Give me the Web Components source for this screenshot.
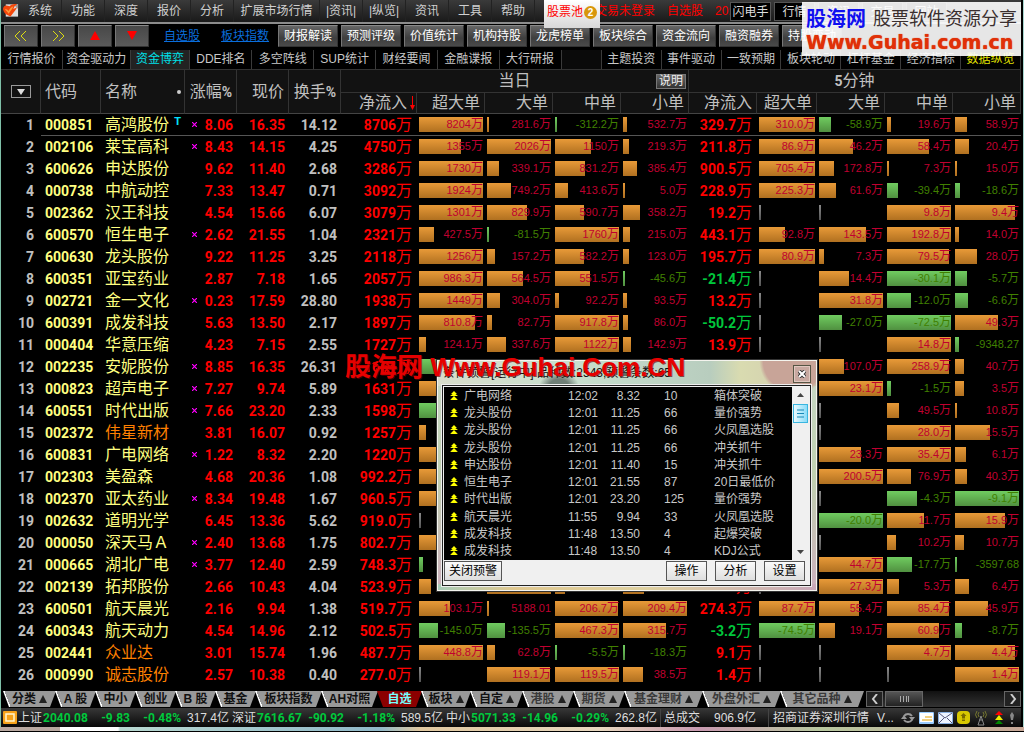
<!DOCTYPE html>
<html lang="zh-CN">
<head>
<meta charset="utf-8">
<title>行情报价</title>
<style>
html,body{margin:0;background:#000;height:100%}
body{font:12px/16px "Liberation Sans","Noto Sans CJK SC",sans-serif;color:#c8c8c8;overflow:hidden}
</style>
</head>
<body>
<trade-desk></trade-desk>
<script>
const BASE = `*{box-sizing:border-box}button,a{font:inherit;color:inherit;white-space:nowrap}button{margin:0;padding:0;border:0;background:none}`;
function define(name, css, html) {
  customElements.define(name, class extends HTMLElement {
    constructor() {
      super();
      this.attachShadow({mode: 'open'}).innerHTML = `<style>${BASE}${css}</style>` + (typeof html === 'function' ? html() : html);
    }
  });
}

define('app-menu', `
:host{display:flex;align-items:stretch;height:24px;background:linear-gradient(#3a3a3a,#1b1b1b 21px);border-bottom:2px solid #8c8c8c;white-space:nowrap;position:relative}
svg{width:17px;height:18px;margin:1px 0 0 1px;flex:none}
nav{display:flex}
nav button{width:43px;border-right:1px solid #222;color:#d0d0d0}
nav button.wide{width:86px}
.pool{width:56px;height:28px;margin-left:9px;background:linear-gradient(#fff,#d8d8d8);color:#f00;z-index:1;padding-bottom:4px;flex:none;display:flex;align-items:center;justify-content:center}
.pool b{width:13px;height:13px;border-radius:7px;background:#d8960a;color:#fff;font:bold 10px/13px "Liberation Sans";margin-left:1px}
.note{color:#f00;line-height:23px;margin-left:-5px;width:72px;flex:none}
.note.s{width:48px;margin:0}.note.t{width:15px;margin:0;overflow:hidden}
.box{width:41px;height:19px;margin:2px 3px 0 0;border:1px solid #555;background:#000;color:#ddd;flex:none}
`, () => {
  const items = ['系统','功能','深度','报价','分析','扩展市场行情','|资讯|','|纵览|','资讯','工具','帮助'];
  return `<svg viewBox="0 0 18 18"><rect x="4" y="3" width="13" height="13" fill="#ddd"/><path d="M12 3h5v5z" fill="#999"/><path d="M1 8C2 3 5 4 8 5C10 3 13 2 16 3C13 5 13 6 12 8L16 6C14 10 11 13 9 16C6 14 3 15 1 8Z" fill="#f4470b"/><path d="M3 8c2 0 3 1 4 2 1-3 3-4 5-5-1 3-3 5-5 8-1-2-3-3-4-5z" fill="#ff9a3a"/></svg>
  <nav>${items.map(t => `<button class="${t.length > 5 ? 'wide' : 'm'}">${t}</button>`).join('')}</nav>
  <button class="pool">股票池<b>2</b></button>
  <span class="note">交易未登录</span><span class="note s">自选股</span><span class="note t">20:</span>
  ${['闪电手','行情','资讯','交易','网站'].map(t => `<button class="box">${t}</button>`).join('')}`;
});

define('tool-bar', `
:host{display:flex;height:26px;padding:1px 0 3px 3px;gap:3px;background:#000;overflow:hidden}
button{width:60px;flex:none;background:linear-gradient(#666,#3e3e3e 60%,#4a4a4a);border:1px solid #333;border-top-color:#8a8a8a;border-left-color:#777;color:#fff;line-height:20px}
.nav{width:34px;background:linear-gradient(#484848,#5a5a5a)}
svg{display:block;margin:auto;width:14px;height:12px}
a{color:#0a6edc;line-height:22px;flex:none}
.a1{margin:0 18px 0 12px}.a2{margin-right:6px}
`, () => {
  const ic = ['<path d="M6 1L1 6l5 5M12 1L7 6l5 5" fill="none" stroke="#dddd10"/>','<path d="M2 1l5 5-5 5M8 1l5 5-5 5" fill="none" stroke="#dddd10"/>','<path d="M7 1l5 9H2z" fill="red"/>','<path d="M7 10L2 1h10z" fill="red"/>'];
  const names = ['上一页','下一页','上移','下移'];
  return ic.map((p,i) => `<button class="nav" aria-label="${names[i]}"><svg viewBox="0 0 14 12">${p}</svg></button>`).join('')
   + '<a class="a1" href="#">自选股</a><a class="a2" href="#">板块指数</a>'
   + ['财报解读','预测评级','价值统计','机构持股','龙虎榜单','板块综合','资金流向','融资融券','持股变动'].map(t => `<button>${t}</button>`).join('');
});

define('view-tabs', `
:host{display:flex;height:19px;background:#0a0a0a}
button{flex:60 1 0;border-right:1px solid #3a3a3a;color:#c8c8c8;background:#000;line-height:19px}
.w{flex-grow:68}.n{flex-grow:62}.gap{flex:40 1 0;border-right:1px solid #3a3a3a}
.on{background:#222;color:#00e0e8}.y{color:#e0e000}
`, () => {
  const l = ['行情报价','资金驱动力','资金博弈','DDE排名','多空阵线','SUP统计','财经要闻','金融谍报','大行研报'];
  const r = ['主题投资','事件驱动','一致预期','板块轮动','杠杆基金','经济指标','数据纵览'];
  return l.map((t,i) => `<button class="${i===1?'w':i===2?'on':'n'}">${t}</button>`).join('') + '<span class="gap"></span>'
   + r.map((t,i) => `<button class="${i===6?'y':''}">${t}</button>`).join('');
});

// Each row: code, name, flag, change, price, turnover, net, four day cells, net 5m, four 5m cells.
// A flow cell is "value/bar width"; "0" is an idle marker, "_" an empty cell.
const ROWS = `000851 高鸿股份 T 8.06 16.35 14.12 8706 8204/64 281.6/2 -312.2/2 532.7/4 329.7 310.0/56 -58.9/12 19.6/4 58.9/12
002106 莱宝高科 x 8.43 14.15 4.25 4750 1355/42 2026/64 1150/36 219.3/6 211.8 86.9/56 46.2/34 58.4/42 20.4/14
600626 申达股份 . 9.62 11.40 2.68 3286 1730/64 339.1/12 831.2/30 385.4/14 900.5 705.4/56 172.8/15 7.3/2 15.0/2
000738 中航动控 . 7.33 13.47 0.71 3092 1924/64 749.2/24 413.6/13 5.0/2 228.9 225.3/56 61.6/17 -39.4/11 -18.6/5
002362 汉王科技 . 4.54 15.66 6.07 3079 1301/64 829.9/40 590.7/29 358.2/17 19.2 0 0 9.8/64 9.4/60
600570 恒生电子 x 2.62 21.55 1.04 2321 427.5/15 -81.5/2 1760/64 215.0/7 443.1 92.8/26 143.5/47 192.8/64 14.0/4
600630 龙头股份 . 9.22 11.25 3.25 2118 1256/64 157.2/8 582.2/29 123.0/6 195.7 80.9/56 7.3/5 79.5/62 28.0/22
600351 亚宝药业 . 2.87 7.18 1.65 2057 986.3/64 564.5/36 551.5/35 -45.6/2 -21.4 0 14.4/30 -30.1/64 -5.7/12
002721 金一文化 x 0.23 17.59 28.80 1938 1449/64 304.0/13 92.2/4 93.5/4 13.2 0 31.8/64 -12.0/24 -6.6/13
600391 成发科技 . 5.63 13.50 2.17 1897 810.8/56 82.7/5 917.8/64 86.0/5 -50.2 0 -27.0/23 -72.5/64 49.3/43
000404 华意压缩 . 4.23 7.15 2.55 1727 124.1/7 337.6/19 1122/64 142.9/8 13.9 0 0 14.8/64 -9348.27/4
002235 安妮股份 x 8.85 16.35 26.31 1664 -/64 _ _ _ _ _ 107.0/25 258.9/62 40.7/9
000823 超声电子 x 7.27 9.74 5.89 1631 +/64 _ _ _ _ _ 23.1/64 -1.5/4 3.5/9
600551 时代出版 x 7.66 23.20 2.33 1598 -/64 _ _ _ _ _ 0 49.5/12 10.8/2
002372 *伟星新材 . 3.81 16.07 0.92 1257 +/7 _ _ _ _ _ 0 28.0/64 15.5/35
600831 广电网络 x 1.22 8.32 2.20 1220 +/64 _ _ _ _ _ 23.3/42 35.4/64 6.1/11
002303 美盈森 . 4.68 20.36 1.08 992.2 +/64 _ _ _ _ _ 200.5/64 76.9/24 40.3/12
002370 亚太药业 x 8.34 19.48 1.67 960.5 +/64 _ _ _ _ _ 0 -4.3/30 -9.1/64
002632 道明光学 . 6.45 13.36 5.62 919.0 0 _ _ _ _ _ -20.0/64 11.7/37 15.9/50
000050 深天马Ａ x 2.40 13.68 1.75 802.7 +/64 _ _ _ _ _ 0 10.2/9 10.7/9
000665 湖北广电 x 3.77 12.40 2.59 748.3 -/4 _ _ _ _ _ 44.7/64 -17.7/25 -3597.68/2
002139 拓邦股份 . 2.66 10.43 4.04 523.9 +/12 +/64 +/10 +/21 38.9 0 27.3/64 5.3/12 6.4/14
600501 航天晨光 . 2.16 9.94 1.38 519.7 103.1/31 5188.01/2 206.7/63 209.4/64 274.3 87.7/56 55.4/40 85.4/62 45.9/33
600343 航天动力 . 4.54 14.96 2.12 502.5 -145.0/19 -135.5/18 467.3/64 315.7/43 -3.2 -74.5/56 19.1/16 60.9/52 -8.7/7
002441 *众业达 . 3.01 15.74 1.96 487.7 448.8/64 62.8/8 -5.5/2 -18.3/2 9.1 0 0 4.7/64 4.4/60
000990 *诚志股份 . 2.57 10.38 0.40 277.0 0 119.1/63 119.5/64 38.5/20 1.4 0 0 0 1.4/64`.split('\n').map(r => r.split(' '));

function net(v) {
  return v === '_' ? '<td></td>' : `<td class="n ${v[0] === '-' ? 'dn' : 'up'}">${v}<i>万</i></td>`;
}
function flow(v) {
  if (v === '_') return '<td></td>';
  if (v === '0') return '<td class="f z" style="--w:2px"></td>';
  const [t, w] = v.split('/');
  const txt = t.length < 2 ? '' : /\.\d\d$/.test(t) ? t : t + '<i>万</i>';
  return `<td class="f ${t[0] === '-' ? 'g' : 'o'}" style="--w:${w}px">${txt}</td>`;
}
define('quote-table', `
:host{display:block;background:#000;padding-bottom:5px}
table{width:100%;table-layout:fixed;border-collapse:separate;border-spacing:0;border-top:1px solid #333}
th{font:16px/20px Roboto,"Noto Sans CJK SC",sans-serif;color:#c0c0c0;background:#121212;height:22px;padding:0 4px;border-right:1px solid #333;text-align:right;white-space:nowrap}
tr:nth-child(2) th{border-top:1px solid #333}
tr:nth-child(2) th,th[rowspan]{border-bottom:1px solid #444}
th.l{text-align:left}th.c{text-align:center}
th.net{padding-right:9px}
th b{font-weight:bold;font-size:14px}
.grp{display:grid;grid-template-columns:1fr auto 1fr;align-items:center}
.grp button{justify-self:end;width:30px;height:15px;font-size:12px;line-height:12px;border:1px solid #777;background:linear-gradient(#666,#333);color:#eee;margin-right:-2px}
.pick{width:20px;height:13px;border:1px solid #999;display:block;margin:auto}
.pick svg,.arr{display:block;margin:auto}
.nm{display:flex;justify-content:space-between;align-items:center;padding-right:0}
.nm u{width:4px;height:4px;border-radius:2px;background:#ccc;margin-right:-1px}
.net span{position:relative}
.net .arr{position:absolute;right:-8px;top:3px}
td{height:22px;padding:0 4px;font:bold 14px/18px Roboto,"Noto Sans CJK SC",sans-serif;text-align:right;white-space:nowrap}
td.i{color:#c0c0c0;padding-right:7px}
td.c{color:#ffff80;text-align:left}
td.m{font-weight:normal;font-size:16px;color:#ffff80;text-align:left;position:relative}
td.m.hot{color:#ff8000}
td.m sup{position:absolute;right:4px;top:2px;font:bold 11px/11px "Liberation Sans";color:#00e0ff}
td i{font:normal 16px/1 "Noto Sans CJK SC",sans-serif;line-height:0}
td.n{padding-right:5px}
.up{color:#f00}.dn{color:#00c83c}.w{color:#c0c0c0}
td.x{position:relative}
td.x svg{position:absolute;left:7px;top:8px}
td.f{font:11px/18px "Liberation Sans",sans-serif;padding:0 2px 2px 2px;background:var(--bar) 2px 3px/var(--w) 15px no-repeat}
td.f i{font-size:12px;line-height:0}
.o{--bar:linear-gradient(#e89a38,#b07020);color:#c00030}
.g{--bar:linear-gradient(#70cc60,#509040);color:#408000}
.z{--bar:linear-gradient(#888,#555)}
tbody tr:first-child td:not(.i){box-shadow:inset 0 -1px #555}
`, () => {
  const cols = [40,60,84,52,52,52,76,68,68,68,68,68,60,68,68,68];
  const sub = ['超大单','大单','中单','小单'].map(t => `<th>${t}</th>`).join('');
  const cross = '<svg width="5" height="5"><path d="M0 0l5 5M5 0L0 5" stroke="#f0f" stroke-width="1.200"/></svg>';
  return `<table><colgroup>${cols.map(w => `<col style="width:${w}px">`).join('')}</colgroup><thead><tr>
  <th rowspan="2"><button class="pick" aria-label="选择"><svg width="8" height="6"><path d="M0 0h8L4 6z" fill="#ddd"/></svg></button></th>
  <th rowspan="2" class="l">代码</th><th rowspan="2" class="l"><div class="nm">名称<u></u></div></th><th rowspan="2">涨幅<b>%</b></th><th rowspan="2">现价</th><th rowspan="2">换手<b>%</b></th>
  <th colspan="5"><div class="grp"><span></span><span>当日</span><button>说明</button></div></th><th colspan="5" class="c"><b>5</b>分钟</th></tr>
  <tr><th class="net"><span>净流入<svg class="arr" width="5" height="14"><path d="M2 0h1v9h2L2.500 14 0 9h2z" fill="red"/></svg></span></th>${sub}<th>净流入</th>${sub}</tr></thead><tbody>` +
  ROWS.map((r, i) => {
    const hot = r[1][0] === '*';
    return `<tr><td class="i">${i + 1}</td><td class="c">${r[0]}</td><td class="m ${hot ? 'hot' : ''}">${r[1].replace('*', '')}${r[2] === 'T' ? '<sup>T</sup>' : ''}</td><td class="up x">${r[2] !== '.' ? cross : ''}${r[3]}</td><td class="up">${r[4]}</td><td class="w">${r[5]}</td>${net(r[6])}${r.slice(7, 11).map(flow).join('')}${net(r[11])}${r.slice(12).map(flow).join('')}</tr>`;
  }).join('') + '</tbody></table>';
});

define('sheet-tabs', `
:host{display:flex;height:17px;padding-left:2px;background:#000;align-items:stretch}
button{flex:none;margin-right:-1px;clip-path:polygon(0 0,100% 0,calc(100% - 6px) 100%,6px 100%);background:linear-gradient(69deg,#fff 7px,#999 7px);font-weight:bold;color:#111;line-height:16px;height:16px;text-align:center}
.dim{color:#3a3a3a}
.on{background:#8b0000;color:#7ff}
s{display:inline-block;width:0;height:0;border:4px solid transparent;border-top:0;border-bottom:8px solid #222;margin-left:3px}
.bar{flex:1;display:flex;background:linear-gradient(#111,#333);margin:0 0 0 3px;height:16px}
.bar button{margin:0;clip-path:none;width:17px;border:1px solid #666;background:#222;color:#aaa}
.bar .thumb{width:38px;margin-left:2px;background:linear-gradient(#555,#222)}
.bar .end{margin-left:auto}
.bar svg{display:block;margin:auto}
`, () => {
  const t = [['分类^',53],['A 股',41],['中小',41],['创业',41],['B 股',41],['基金',41],['板块指数',67],['AH对照',57],['自选',45],['板块^',50],['自定^',53],['港股^',52],['期货^',52],['基金理财^',79],['外盘外汇^',79],['其它品种^',84]];
  return t.map(([n, w], i) => `<button class="${i === 8 ? 'on' : i > 10 ? 'dim' : ''}" style="width:${w}px">${n.replace('^', '<s></s>')}</button>`).join('') +
  `<div class="bar"><button aria-label="向左"><svg width="8" height="10"><path d="M6 0L2 5l4 5" fill="none" stroke="#ccc" stroke-width="2"/></svg></button><button class="thumb" aria-label="滚动"><svg width="9" height="6"><path d="M.5 0v6M3.500 0v6M6.500 0v6M8.500 0v6" stroke="#aaa"/></svg></button><button class="end" aria-label="向右"><svg width="8" height="10"><path d="M2 0l4 5-4 5" fill="none" stroke="#ccc" stroke-width="2"/></svg></button></div>`;
});

define('status-bar', `
:host{display:flex;height:19px;align-items:center;background:linear-gradient(#383838,#080808);color:#ddd;padding-left:1px;white-space:nowrap;line-height:18px}
svg{flex:none}
.lab{width:25px;flex:none}
b{font:bold 12px/18px Roboto,sans-serif;color:#00c83c;flex:none}
.p{width:48px}.d{width:45px;text-align:right;padding-right:6px}.r{width:48px;text-align:right;padding-right:3px}
.v{width:48px;padding-left:3px;flex:none}
.lead{width:16px}
.tot{border-left:1px solid #444;padding-left:3px;width:108px;display:flex;justify-content:space-between;padding-right:12px;flex:none}
.src{border-left:1px solid #444;padding-left:4px;flex:1;display:flex;gap:8px}
.ic{display:flex;gap:4px;align-items:center;padding-right:6px}
`, () => {
  const q = [['上证','2040.08','-9.83','-0.48%','317.4亿'],['深证','7616.67','-90.92','-1.18%','589.5亿'],['中小','5071.33','-14.96','-0.29%','262.8亿']];
  return `<svg class="lead" width="14" height="14" viewBox="0 0 14 14"><rect x="0" y="0" width="14" height="13" rx="1" fill="#f6a21a"/><rect x="3" y="3" width="8" height="7" fill="none" stroke="#fff6d0" stroke-width="1.500"/></svg>` +
  q.map(a => `<span class="lab">${a[0]}</span><b class="p">${a[1]}</b><b class="d">${a[2]}</b><b class="r">${a[3]}</b><span class="v">${a[4]}</span>`).join('') +
  `<span class="tot"><span>总成交</span><span>906.9亿</span></span><span class="src"><span>招商证券深圳行情</span><span>V...</span></span>
  <span class="ic"><svg width="14" height="14" viewBox="0 0 14 14"><path d="M3 5a5 5 0 0 1 8 0M11 9a5 5 0 0 1-8 0" fill="none" stroke="#999" stroke-width="2"/><path d="M8 6h6l-3 4zM0 8h6L3 4z" fill="#999"/></svg>
  <svg width="15" height="12"><rect width="15" height="12" rx="1" fill="#9cf"/><rect x="1" y="1" width="13" height="9" fill="#fff"/><path d="M6 5h7M3 8h10" stroke="#e0a000"/></svg>
  <svg width="15" height="12"><rect width="15" height="12" rx="1" fill="#8ab0e0"/><rect x="1" y="1" width="13" height="10" fill="#eef4ff"/><path d="M1 1l6 5 7-5M1 11l5-5M14 11L9 6" fill="none" stroke="#557"/></svg>
  <svg width="13" height="13"><rect width="13" height="13" rx="4" fill="#d8c800"/><path d="M6.500 2l3 3H8v5H5V5H3.500z" fill="#7a6a00"/><path d="M4 8h5" stroke="#d8c800"/></svg>
  <svg width="14" height="16"><path d="M7 6L4 15h6zM5 10h4" fill="none" stroke="#888"/><path d="M3 1Q0 5 3 8M5 2Q3 4 5 7M11 1q3 4 0 7M9 2q2 2 0 5" fill="none" stroke="#777830"/></svg>
  <svg width="13" height="14"><path d="M7 0l4 4H3z" fill="red"/><path d="M7 4l4 5H3z" fill="#ee0"/><path d="M7 9l4 4H3z" fill="#080"/></svg>
  <svg width="6" height="14"><path d="M3 1l2 3-1 5H2L1 4z" fill="#888"/><path d="M2 11h2v2H2z" fill="#888"/></svg></span>`;
});

const ALERTS = [['广电网络','12:02','8.32',10,'箱体突破'],['龙头股份','12:01','11.25',66,'量价强势'],['龙头股份','12:01','11.25',66,'火凤凰选股'],['龙头股份','12:01','11.25',66,'冲关抓牛'],['申达股份','12:01','11.40',15,'冲关抓牛'],['恒生电子','12:01','21.55',87,'20日最低价'],['时代出版','12:01','23.20',125,'量价强势'],['航天晨光','11:55','9.94',33,'火凤凰选股'],['成发科技','11:48','13.50',4,'起爆突破'],['成发科技','11:48','13.50',4,'KDJ公式']];
define('alert-window', `
:host{display:flex;flex-direction:column;border:1px solid #f4f4ee;outline:1px solid #333;padding:0 5px 4px 4px;background:radial-gradient(circle at 94% 0,#c8a498 0 30px,transparent 34px),radial-gradient(ellipse at 32% 26px,#6f7f76 0 10px,transparent 20px),linear-gradient(90deg,#d8dccb 0,#c8dfce 35%,#b8cdbe 72%,#d9dbb0 80%,#cfc9b0) top/100% 25px no-repeat,linear-gradient(90deg,#a8ccb8,#e0c890 20%,#ded0a0 55%,#c8a8b8) bottom/100% 6px no-repeat,linear-gradient(#c8d8c8,#c0d0b0 50%,#ccb0bc)}
header{display:flex;justify-content:space-between;height:24px;color:#111;padding:4px 0 0 1px;white-space:nowrap}
header button{width:18px;height:18px;border:1px solid #554;background:#c8a8a0;box-shadow:inset 0 0 0 1px #e0c8c0}
header svg{display:block;margin:auto}
.body{border:1px solid #222;outline:1px solid #eee;background:#f0f0f0;padding:1px}
.list{display:flex;background:#000;height:173px}
table{flex:1;border-spacing:0;table-layout:fixed;width:0}
td{height:17px;padding:0;line-height:16px;color:#c8c8c8;white-space:nowrap}
td svg{display:block;margin-left:6px}
.pr{text-align:right}
.ct{padding-left:24px}
.sb{width:17px;background:#f0f0f0;display:flex;flex-direction:column;align-items:center;padding:6px 0 5px}
.thumb{width:15px;height:19px;border:1px solid #3ab6e0;background:linear-gradient(90deg,#e8faff,#8adcf8);margin:6px 0 auto;display:grid;place-items:center}
footer{display:flex;gap:8px;padding:1px 4px 3px 0;height:24px}
footer button{width:41px;height:20px;border:1px solid #555;background:linear-gradient(#fafafa,#dedede);color:#000;line-height:18px}
footer button:first-child{width:58px;margin-right:auto}
`, () => `<header><span>条件预警[运行中] 品种数:2543,预警条数:65</span><button aria-label="关闭"><svg width="8" height="8"><path d="M1 1l6 6M7 1L1 7" stroke="#333" stroke-width="4"/><path d="M1 1l6 6M7 1L1 7" stroke="#fff" stroke-width="2"/></svg></button></header>
<div class="body"><div class="list"><table><colgroup><col style="width:20px"><col style="width:104px"><col style="width:32px"><col style="width:40px"><col style="width:74px"><col></colgroup>
${ALERTS.map(a => `<tr><td><svg width="8" height="10"><path d="M4 0l3 3H1zM4 2l4 3H0zM3 4h2v1H3zM4 5l3 3H1zM4 6l4 3H0z" fill="#ff0"/></svg></td><td>${a[0]}</td><td>${a[1]}</td><td class="pr">${a[2]}</td><td class="ct">${a[3]}</td><td>${a[4]}</td></tr>`).join('')}</table>
<div class="sb"><svg width="7" height="5"><path d="M0 4l3.500-4L7 4z" fill="#444"/></svg><div class="thumb"><svg width="7" height="9"><path d="M0 1h7M0 4.500h7M0 8h7" stroke="#1888b8"/></svg></div><svg width="7" height="5"><path d="M0 0h7L3.500 4z" fill="#444"/></svg></div></div>
<footer><button>关闭预警</button><button>操作</button><button>分析</button><button>设置</button></footer></div>`);

define('site-mark', `
:host{display:block;pointer-events:none;background:#ffffffe6;white-space:nowrap;padding:5px 0 0 4px}
.a{display:flex;align-items:center;gap:7px;line-height:24px;height:24px}
.a b{font-size:20px;color:#1010f0}
.a span{font-size:18px;color:#3a2f2f}
.b{font:bold 19px/22px "DejaVu Sans",sans-serif;color:#e03008;text-shadow:0 0 1px #e03008}
`, '<div class="a"><b>股海网</b><span>股票软件资源分享</span></div><div class="b">Www.Guhai.com.cn</div>');

define('trade-desk', `
:host{display:block;position:relative;min-height:100vh;background:#000}
main{border-left:1px solid #7fc0a8;border-right:1px solid #a8d8d0;padding-right:2px}
.desk{height:4px;background:linear-gradient(90deg,#b8a8a0 0 60px,#fff 60px 118px,#b8d8d0 120px,#90b8c8 380px,#e0c8a0 420px,#e8d8c0 600px,#c89ab0 700px,#b8c8a0 820px,#c8a898)}
alert-window{position:absolute;left:437px;top:360px;width:380px}
site-mark{position:absolute;right:3px;top:2px;width:219px;height:54px}
.wm{position:absolute;left:345px;top:352px;font-size:26px;line-height:30px;font-weight:bold;color:#e60000;white-space:nowrap;pointer-events:none;text-shadow:1px 1px #600a}
`, `<main><app-menu></app-menu><tool-bar></tool-bar><view-tabs></view-tabs><quote-table></quote-table><sheet-tabs></sheet-tabs><status-bar></status-bar></main><div class="desk"></div>
<alert-window></alert-window><div class="wm">股海网 Www.Guhai.Com.CN</div><site-mark></site-mark>`);
</script>
</body>
</html>
